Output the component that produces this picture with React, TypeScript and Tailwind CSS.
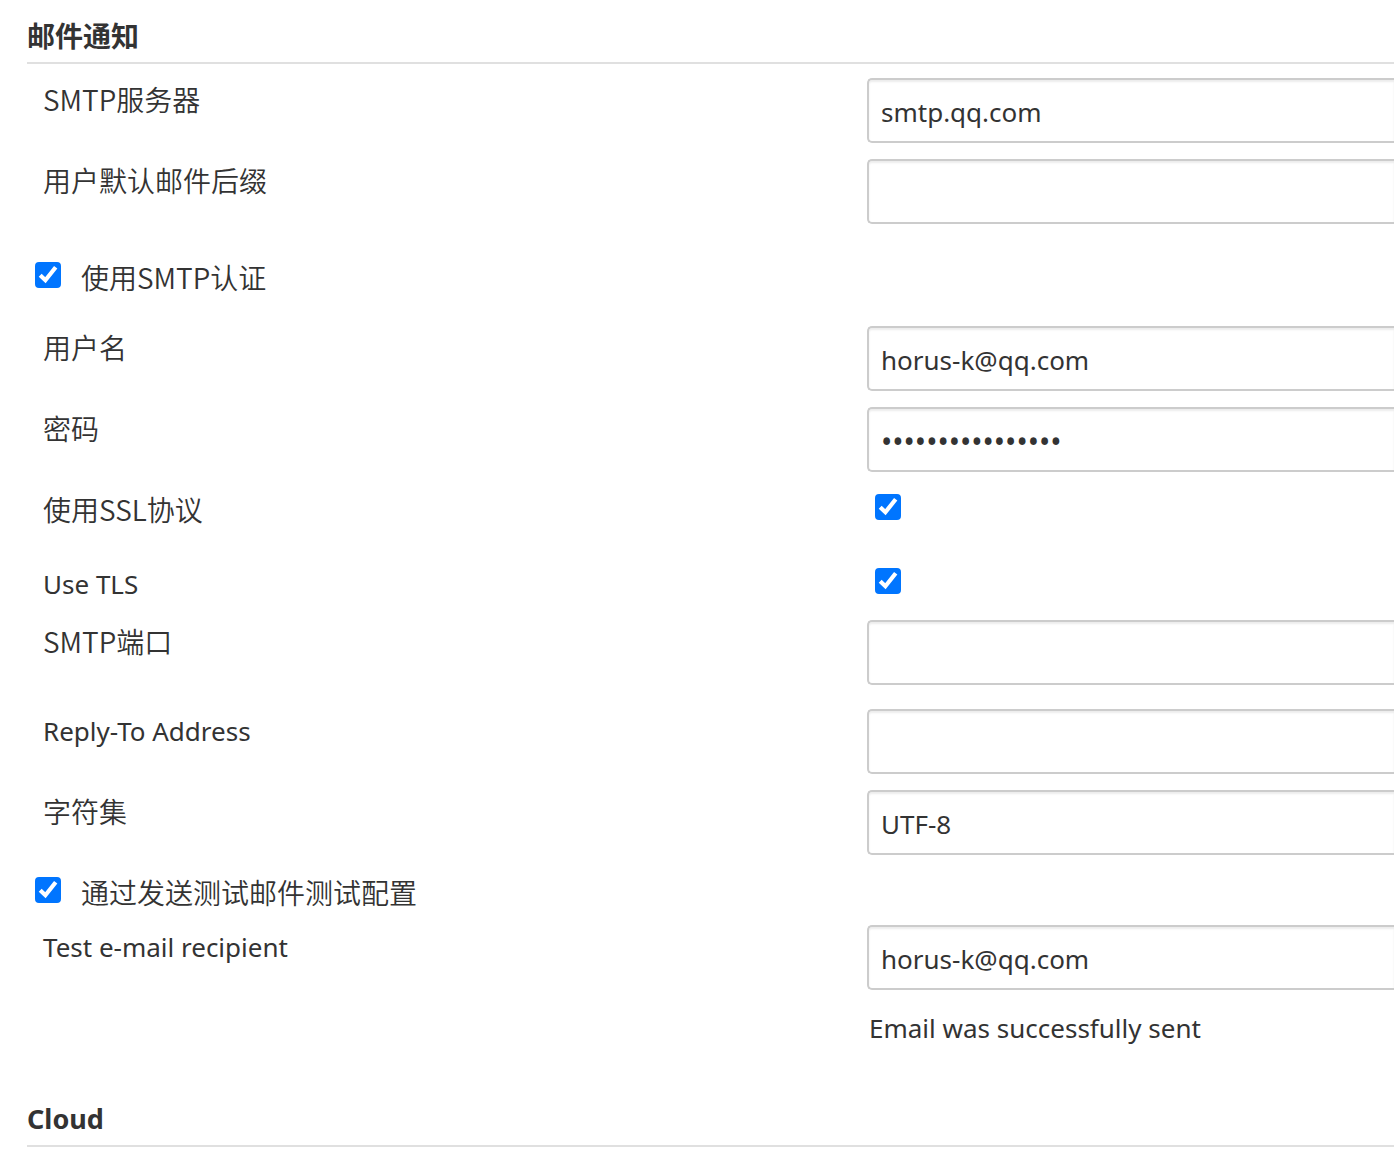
import type { ReactNode } from "react";

const latin = "font-['Noto_Sans','Noto_Sans_CJK_SC',sans-serif]";
const latinLabel = `${latin} text-[26px] leading-[44px]`;
const cjkLabel = "font-['Noto_Sans_CJK_SC',sans-serif] text-[28px] font-[350] leading-[42px]";

function Heading({ children, className }: { children: ReactNode; className: string }) {
  return (
    <h2 className={`flex h-[52px] items-center border-b-2 border-[#e0e0e0] font-bold ${className}`}>
      {children}
    </h2>
  );
}

function Check({ id }: { id: string }) {
  return (
    <span className="mt-[6px] grid size-[26px] shrink-0">
      <input
        id={id}
        type="checkbox"
        defaultChecked
        className="peer col-start-1 row-start-1 size-[26px] appearance-none rounded-[4px] border-2 border-[#767676] bg-white checked:border-[#0075ff] checked:bg-[#0075ff]"
      />
      <svg
        viewBox="0 0 26 26"
        className="pointer-events-none invisible col-start-1 row-start-1 size-[26px] peer-checked:visible"
        aria-hidden="true"
      >
        <path d="M5.2 13.2 10.4 18.2 20.7 5.2" fill="none" stroke="#fff" strokeWidth="4.2" />
      </svg>
    </span>
  );
}

type RowProps = { id: string; label: string; className?: string; font?: string; children: ReactNode };

function Row({ id, label, className = "", font = cjkLabel, children }: RowProps) {
  return (
    <div className={`grid grid-cols-[61.45%_minmax(0,1fr)] items-start ${className}`}>
      <label htmlFor={id} className={`h-11 pl-4 ${font}`}>
        {label}
      </label>
      {children}
    </div>
  );
}

type FieldProps = Omit<RowProps, "children"> & { value?: string; type?: string };

function Field({ value = "", type = "text", ...row }: FieldProps) {
  const size = type === "password" ? "pt-1 text-[30px]" : "pt-[2px] text-[26px]";
  return (
    <Row {...row}>
      <input
        id={row.id}
        type={type}
        defaultValue={value}
        className={`h-[65px] w-full rounded-l-[5px] border-2 border-r-0 border-[#ccc] bg-white pl-3 shadow-[inset_0_2px_2px_rgba(0,0,0,0.075)] outline-none ${latin} ${size}`}
      />
    </Row>
  );
}

function CheckLine({ id, label, className }: { id: string; label: string; className: string }) {
  return (
    <div className={`flex items-start gap-5 pl-2 ${className}`}>
      <Check id={id} />
      <label htmlFor={id} className={`h-11 ${cjkLabel}`}>
        {label}
      </label>
    </div>
  );
}

export default function App() {
  return (
    <main className="min-h-screen bg-white pt-3 pl-[27px] text-[#333]">
      <form onSubmit={(e) => e.preventDefault()}>
        <Heading className="pb-1 font-['Noto_Sans_CJK_SC',sans-serif] text-[28px]">邮件通知</Heading>
        <Field id="server" label="SMTP服务器" value="smtp.qq.com" className="mt-[14px]" />
        <Field id="suffix" label="用户默认邮件后缀" className="mt-4" />
        <CheckLine id="auth" label="使用SMTP认证" className="mt-8" />
        <Field id="user" label="用户名" value="horus-k@qq.com" className="mt-[26px]" />
        <Field id="password" label="密码" type="password" value="abcdefghijklmnop" className="mt-4" />
        <Row id="ssl" label="使用SSL协议" className="mt-4">
          <div className="pl-2">
            <Check id="ssl" />
          </div>
        </Row>
        <Row id="tls" label="Use TLS" font={latinLabel} className="mt-[30px]">
          <div className="pl-2">
            <Check id="tls" />
          </div>
        </Row>
        <Field id="port" label="SMTP端口" className="mt-[14px]" />
        <Field id="reply" label="Reply-To Address" font={latinLabel} className="mt-6" />
        <Field id="charset" label="字符集" value="UTF-8" className="mt-4" />
        <CheckLine id="test" label="通过发送测试邮件测试配置" className="mt-4" />
        <Field
          id="recipient"
          label="Test e-mail recipient"
          font={latinLabel}
          value="horus-k@qq.com"
          className="mt-[10px]"
        />
        <output className={`mt-4 ml-[61.45%] block pl-[2px] ${latinLabel}`}>
          Email was successfully sent
        </output>
        <Heading className="mt-[45px] pb-[2px] font-['Noto_Sans',sans-serif] text-[27px]">Cloud</Heading>
      </form>
    </main>
  );
}
